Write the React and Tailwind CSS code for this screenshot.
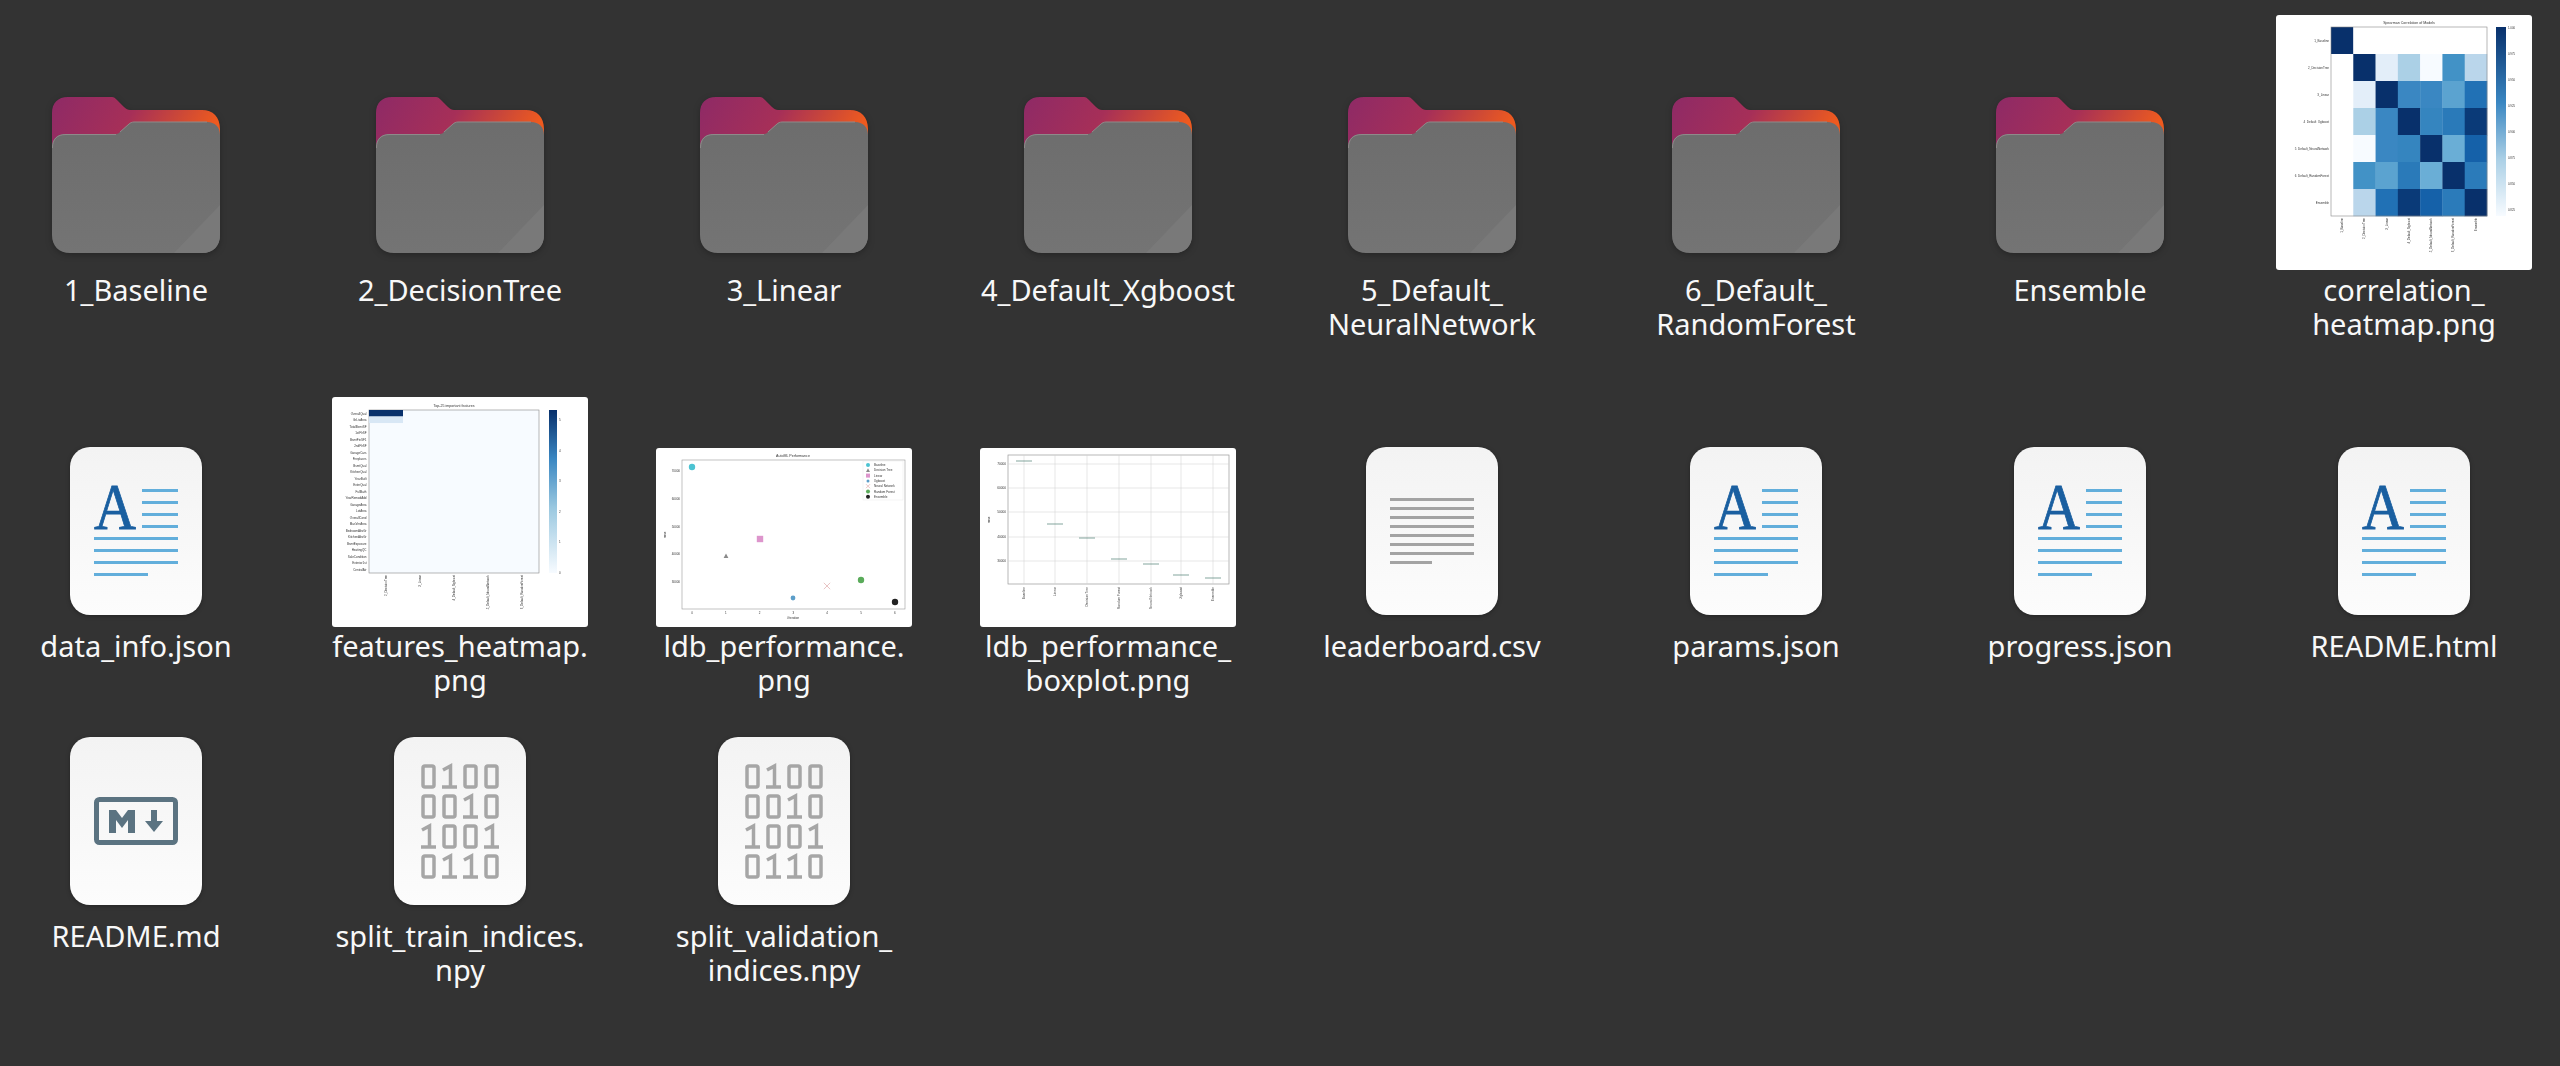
import React from 'react';

const DARK = '#08306b';

const matrix = [
  [DARK, '#fff', '#fff', '#fff', '#fff', '#fff', '#fff'],
  ['#fff', DARK, '#e3eef9', '#abd0e6', '#f7fbff', '#4292c6', '#bad6eb'],
  ['#fff', '#e3eef9', DARK, '#3a87c2', '#3a87c2', '#5ba3d0', '#2171b5'],
  ['#fff', '#abd0e6', '#3a87c2', DARK, '#3585bf', '#2a7ab9', '#0a3a78'],
  ['#fff', '#f7fbff', '#3a87c2', '#3585bf', DARK, '#6aaed6', '#1561a9'],
  ['#fff', '#4292c6', '#5ba3d0', '#2a7ab9', '#6aaed6', DARK, '#2b7bba'],
  ['#fff', '#bad6eb', '#2171b5', '#0a3a78', '#1561a9', '#2b7bba', DARK],
];

const models = ['1_Baseline', '2_DecisionTree', '3_Linear', '4_Default_Xgboost', '5_Default_NeuralNetwork', '6_Default_RandomForest', 'Ensemble'];
const features = ['OverallQual', 'GrLivArea', 'TotalBsmtSF', '1stFlrSF', 'BsmtFinSF1', '2ndFlrSF', 'GarageCars', 'Fireplaces', 'BsmtQual', 'KitchenQual', 'YearBuilt', 'ExterQual', 'FullBath', 'YearRemodAdd', 'GarageArea', 'LotArea', 'OverallCond', 'MasVnrArea', 'BedroomAbvGr', 'KitchenAbvGr', 'BsmtExposure', 'HeatingQC', 'SaleCondition', 'Exterior1st', 'CentralAir'];

function Folder() {
  return (
    <svg width="168" height="156" viewBox="0 0 168 156" className="mb-[20px] drop-shadow-[0_2px_3px_rgba(0,0,0,0.25)]">
      <defs>
        <linearGradient id="folderBack" x1="0" y1="0" x2="1" y2="0.25">
          <stop offset="0" stopColor="#8e2a66" />
          <stop offset="0.5" stopColor="#a62f58" />
          <stop offset="0.8" stopColor="#cf4a35" />
          <stop offset="1" stopColor="#ee5a1f" />
        </linearGradient>
        <linearGradient id="folderFront" x1="0" y1="0" x2="0" y2="1">
          <stop offset="0" stopColor="#6d6d6d" />
          <stop offset="1" stopColor="#747474" />
        </linearGradient>
      </defs>
      <path d="M16 0H60C62 0 63 1 65 3L72 10C74 12 76 13 78 13H150C161 13 168 20 168 32V70H0V16C0 6 6 0 16 0Z" fill="url(#folderBack)" />
      <path d="M14 37H64C66 37 67 36 68 35L77 27C78 26 80 25 82 25H155C163 25 168 30 168 38V138C168 149 161 156 150 156H18C7 156 0 149 0 138V51C0 42 5 37 14 37Z" fill="url(#folderFront)" />
      <path d="M64 37.5H14C5 37.5 .5 42 .5 51M68 35L77 27C78 26 80 25 82 25H155" fill="none" stroke="#8e8a8a" strokeWidth="1" />
      <path d="M168 108V138C168 149 161 156 150 156H122Z" fill="#797979" />
    </svg>
  );
}

function Page({ children }) {
  return (
    <svg width="132" height="168" viewBox="0 0 132 168" className="mb-[14px] drop-shadow-[0_1px_2px_rgba(0,0,0,0.3)]">
      <defs>
        <linearGradient id="paper" x1="0" y1="0" x2="0" y2="1">
          <stop offset="0" stopColor="#f3f3f3" />
          <stop offset="1" stopColor="#fcfcfc" />
        </linearGradient>
      </defs>
      <rect width="132" height="168" rx="20" fill="url(#paper)" />
      {children}
    </svg>
  );
}

function TextDoc() {
  return (
    <Page>
      <text x="24" y="82" fontFamily="'Liberation Serif', serif" fontSize="66" fill="#1a5fa0" stroke="#1a5fa0" strokeWidth="0.8" textLength="42" lengthAdjust="spacingAndGlyphs">A</text>
      {[42, 54, 66, 78].map((y) => <rect key={y} x="72" y={y} width="36" height="3" fill="#62aedb" />)}
      {[90, 102, 114].map((y) => <rect key={y} x="24" y={y} width="84" height="3" fill="#62aedb" />)}
      <rect x="24" y="126" width="54" height="3" fill="#62aedb" />
    </Page>
  );
}

function CsvDoc() {
  return (
    <Page>
      {[51, 60, 69, 78, 87, 96, 105].map((y) => <rect key={y} x="24" y={y} width="84" height="3" fill="#a3a3a3" />)}
      <rect x="24" y="114" width="42" height="3" fill="#a3a3a3" />
    </Page>
  );
}

function MarkdownDoc() {
  return (
    <Page>
      <rect x="26.5" y="62.5" width="79" height="43" rx="3" fill="none" stroke="#5b7381" strokeWidth="5" />
      <path d="M39 96V73H46L52 81L58 73H65V96H58V83L52 91L46 83V96Z" fill="#5b7381" />
      <path d="M81 73H87V84H93L84 95L75 84H81Z" fill="#5b7381" />
    </Page>
  );
}

function Bit({ v, x, y }) {
  if (v === '0') {
    return <rect x={x + 2} y={y + 2} width="11" height="21" rx="2" fill="none" stroke="#a6a6a6" strokeWidth="3.5" />;
  }
  return <path d={`M${x + 1} ${y + 6}L${x + 8.5} ${y + 2}V${y + 23}M${x} ${y + 23}H${x + 15}`} fill="none" stroke="#a6a6a6" strokeWidth="3.5" />;
}

function BinaryDoc() {
  const lines = ['0100', '0010', '1001', '0110'];
  return (
    <Page>
      {lines.map((line, r) => line.split('').map((v, c) => <Bit key={`${r}-${c}`} v={v} x={27 + c * 21} y={27 + r * 30} />))}
    </Page>
  );
}

const tiny = "fill-[#333] font-['Liberation_Sans',sans-serif]";

function CorrelationThumb() {
  const cw = 156 / 7;
  const ch = 189 / 7;
  return (
    <svg width="256" height="255" viewBox="0 0 256 255" className="mb-[3px] rounded-[3px] bg-white blur-[0.4px]">
      <defs>
        <linearGradient id="corrBar" x1="0" y1="1" x2="0" y2="0">
          <stop offset="0" stopColor="#f7fbff" />
          <stop offset="0.3" stopColor="#abd0e6" />
          <stop offset="0.6" stopColor="#3a87c2" />
          <stop offset="1" stopColor={DARK} />
        </linearGradient>
      </defs>
      <text x="133" y="9" textAnchor="middle" fontSize="3.6" className={tiny}>Spearman Correlation of Models</text>
      {matrix.map((row, r) => row.map((c, i) => <rect key={`${r}-${i}`} x={55 + i * cw} y={12 + r * ch} width={cw + 0.3} height={ch + 0.3} fill={c} />))}
      <rect x="55" y="12" width="156" height="189" fill="none" stroke="#888" strokeWidth="0.6" />
      {models.map((m, i) => (
        <g key={m}>
          <text x="53" y={26.5 + i * ch} textAnchor="end" fontSize="3" className={tiny}>{m}</text>
          <text transform={`translate(${67 + i * cw} 203) rotate(-90)`} textAnchor="end" fontSize="3" className={tiny}>{m}</text>
        </g>
      ))}
      <rect x="220" y="12" width="10" height="189" fill="url(#corrBar)" />
      {['1.000', '0.975', '0.950', '0.925', '0.900', '0.875', '0.850', '0.825'].map((t, i) => (
        <text key={t} x="232" y={14 + i * 26} fontSize="2.8" className={tiny}>{t}</text>
      ))}
    </svg>
  );
}

function FeaturesThumb() {
  const step = 163 / 25;
  return (
    <svg width="256" height="230" viewBox="0 0 256 230" className="mb-[2px] rounded-[3px] bg-white blur-[0.4px]">
      <defs>
        <linearGradient id="featBar" x1="0" y1="1" x2="0" y2="0">
          <stop offset="0" stopColor="#f7fbff" />
          <stop offset="0.4" stopColor="#9ac8e0" />
          <stop offset="0.7" stopColor="#3a87c2" />
          <stop offset="1" stopColor={DARK} />
        </linearGradient>
      </defs>
      <text x="122" y="10" textAnchor="middle" fontSize="3.6" className={tiny}>Top-25 important features</text>
      <rect x="37" y="13" width="170" height="163" fill="#f7fbff" stroke="#888" strokeWidth="0.6" />
      <rect x="37" y="13" width="34" height={step} fill={DARK} />
      <rect x="37" y={13 + step} width="34" height={step} fill="#d8e7f5" />
      {features.map((f, i) => (
        <text key={f} x="34.5" y={17.5 + i * step} textAnchor="end" fontSize="3" className={tiny}>{f}</text>
      ))}
      {['2_DecisionTree', '3_Linear', '4_Default_Xgboost', '5_Default_NeuralNetwork', '6_Default_RandomForest'].map((m, i) => (
        <text key={m} transform={`translate(${55 + i * 34} 178) rotate(-90)`} textAnchor="end" fontSize="3" className={tiny}>{m}</text>
      ))}
      <rect x="217" y="13" width="8" height="163" fill="url(#featBar)" />
      {['5', '4', '3', '2', '1', '0'].map((t, i) => (
        <text key={t} x="227" y={24 + i * 30.5} fontSize="3" className={tiny}>{t}</text>
      ))}
    </svg>
  );
}

function marker(i, x, y, s) {
  if (i === 0) return <circle cx={x} cy={y} r={2 * s} fill="#4cc3d2" />;
  if (i === 1) return <path d={`M${x} ${y - 2 * s}L${x + 2 * s} ${y + 1.6 * s}H${x - 2 * s}Z`} fill="#8a8a8a" />;
  if (i === 2) return <rect x={x - 2 * s} y={y - 2 * s} width={4 * s} height={4 * s} fill="#dd95cc" />;
  if (i === 3) return <circle cx={x} cy={y} r={1.5 * s} fill="#5c9ec9" />;
  if (i === 4) return <path d={`M${x - 2 * s} ${y - 2 * s}L${x + 2 * s} ${y + 2 * s}M${x + 2 * s} ${y - 2 * s}L${x - 2 * s} ${y + 2 * s}`} stroke="#e3b5b5" strokeWidth="0.8" />;
  if (i === 5) return <circle cx={x} cy={y} r={2 * s} fill="#5aab5a" />;
  return <circle cx={x} cy={y} r={2 * s} fill="#222" />;
}

function PerformanceThumb() {
  const legend = ['Baseline', 'Decision Tree', 'Linear', 'Xgboost', 'Neural Network', 'Random Forest', 'Ensemble'];
  const points = [[36, 19], [70, 108], [104, 91], [137, 150], [171, 138], [205, 132], [239, 154]];
  return (
    <svg width="256" height="179" viewBox="0 0 256 179" className="mb-[2px] rounded-[3px] bg-white blur-[0.4px]">
      <text x="137" y="9" textAnchor="middle" fontSize="3.6" className={tiny}>AutoML Performance</text>
      <rect x="26" y="12" width="223" height="149" fill="none" stroke="#999" strokeWidth="0.6" />
      {['70000', '60000', '50000', '40000', '30000'].map((t, i) => (
        <text key={t} x="24" y={24 + i * 27.8} textAnchor="end" fontSize="3" className={tiny}>{t}</text>
      ))}
      {[0, 1, 2, 3, 4, 5, 6].map((t) => (
        <text key={t} x={36 + t * 33.8} y="166" textAnchor="middle" fontSize="3" className={tiny}>{t}</text>
      ))}
      <text x="137" y="171" textAnchor="middle" fontSize="3" className={tiny}>#iteration</text>
      <text transform="translate(10 87) rotate(-90)" textAnchor="middle" fontSize="3" className={tiny}>rmse</text>
      {points.map(([x, y], i) => <g key={i}>{marker(i, x, y, i === 1 ? 1.2 : 1.6)}</g>)}
      <rect x="207" y="13" width="40" height="39" fill="#fff" stroke="#e5e5e5" strokeWidth="0.4" />
      {legend.map((l, i) => (
        <g key={l}>
          {marker(i, 212, 17 + i * 5.3, 1)}
          <text x="218" y={18 + i * 5.3} fontSize="3" className={tiny}>{l}</text>
        </g>
      ))}
    </svg>
  );
}

function BoxplotThumb() {
  const xs = [44, 75, 107, 139, 171, 201, 233];
  const medians = [13, 76, 90, 111, 116, 127, 130];
  const names = ['Baseline', 'Linear', 'Decision Tree', 'Random Forest', 'Neural Network', 'Xgboost', 'Ensemble'];
  return (
    <svg width="256" height="179" viewBox="0 0 256 179" className="mb-[2px] rounded-[3px] bg-white blur-[0.4px]">
      <rect x="28" y="7" width="221" height="129" fill="none" stroke="#999" strokeWidth="0.7" />
      {xs.map((x) => <line key={x} x1={x} y1="7" x2={x} y2="136" stroke="#cfcfcf" strokeWidth="0.5" />)}
      {[16, 40, 64, 89, 113].map((y) => <line key={y} x1="28" y1={y} x2="249" y2={y} stroke="#cfcfcf" strokeWidth="0.5" />)}
      {['70000', '60000', '50000', '40000', '30000'].map((t, i) => (
        <text key={t} x="26" y={17 + i * 24.2} textAnchor="end" fontSize="3.2" className={tiny}>{t}</text>
      ))}
      <text transform="translate(10 72) rotate(-90)" textAnchor="middle" fontSize="3" className={tiny}>rmse</text>
      {xs.map((x, i) => (
        <g key={x}>
          <line x1={x - 8} y1={medians[i]} x2={x + 8} y2={medians[i]} stroke="#4f7f73" strokeWidth="0.7" />
          <text transform={`translate(${x + 1} 139) rotate(-90)`} textAnchor="end" fontSize="3.2" className={tiny}>{names[i]}</text>
        </g>
      ))}
    </svg>
  );
}

const rows = [
  {
    area: 'h-[258px]',
    items: [
      [<Folder />, '1_Baseline'],
      [<Folder />, '2_DecisionTree'],
      [<Folder />, '3_Linear'],
      [<Folder />, '4_Default_Xgboost'],
      [<Folder />, '5_Default_\nNeuralNetwork'],
      [<Folder />, '6_Default_\nRandomForest'],
      [<Folder />, 'Ensemble'],
      [<CorrelationThumb />, 'correlation_\nheatmap.png'],
    ],
  },
  {
    area: 'h-[232px]',
    items: [
      [<TextDoc />, 'data_info.json'],
      [<FeaturesThumb />, 'features_heatmap.\npng'],
      [<PerformanceThumb />, 'ldb_performance.\npng'],
      [<BoxplotThumb />, 'ldb_performance_\nboxplot.png'],
      [<CsvDoc />, 'leaderboard.csv'],
      [<TextDoc />, 'params.json'],
      [<TextDoc />, 'progress.json'],
      [<TextDoc />, 'README.html'],
    ],
  },
  {
    area: 'h-[182px]',
    items: [
      [<MarkdownDoc />, 'README.md'],
      [<BinaryDoc />, 'split_train_indices.\nnpy'],
      [<BinaryDoc />, 'split_validation_\nindices.npy'],
    ],
  },
];

export default function App() {
  return (
    <div className="h-screen w-full overflow-hidden bg-[#333333] pt-[15px] font-['Noto_Sans',sans-serif] text-[#f8f8f8]">
      <div className="flex flex-col gap-y-[40px]">
        {rows.map((row, r) => (
          <div key={r} className={`grid grid-cols-[repeat(8,272px)] gap-x-[52px] ${r === 1 ? 'mt-[16px]' : ''}`}>
            {row.items.map(([icon, label], i) => (
              <div key={i} className="flex flex-col items-center">
                <div className={`flex items-end justify-center ${row.area}`}>{icon}</div>
                <div className="h-[68px] whitespace-pre-line text-center text-[29px] leading-[34px]">{label}</div>
              </div>
            ))}
          </div>
        ))}
      </div>
    </div>
  );
}
